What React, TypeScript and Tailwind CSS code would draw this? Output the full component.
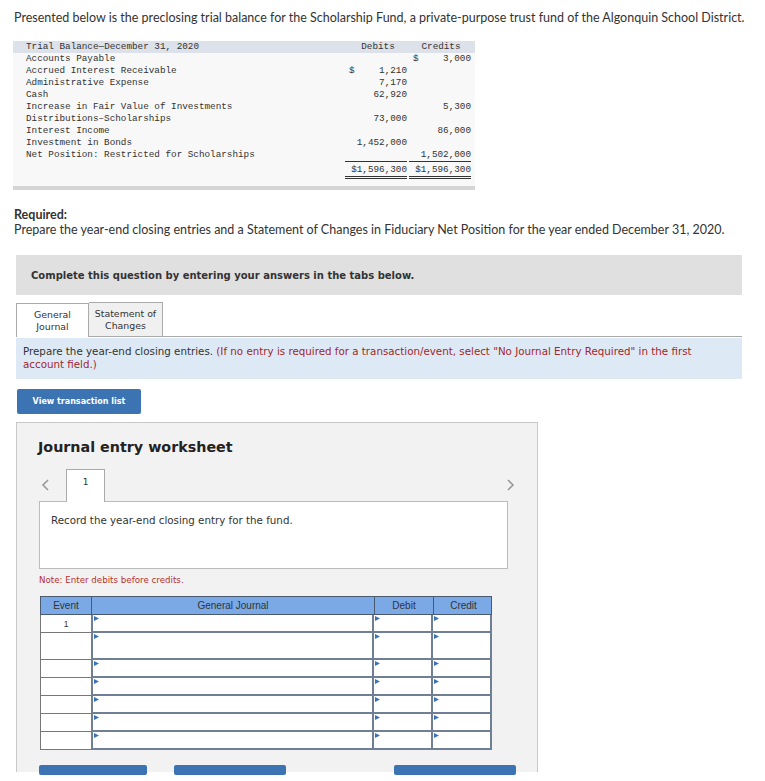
import React from "react";

const rows: [string, string, string, string, string][] = [
  ["Accounts Payable", "", "", "$", "3,000"],
  ["Accrued Interest Receivable", "$", "1,210", "", ""],
  ["Administrative Expense", "", "7,170", "", ""],
  ["Cash", "", "62,920", "", ""],
  ["Increase in Fair Value of Investments", "", "", "", "5,300"],
  ["Distributions\u2013Scholarships", "", "73,000", "", ""],
  ["Interest Income", "", "", "", "86,000"],
  ["Investment in Bonds", "", "1,452,000", "", ""],
  ["Net Position: Restricted for Scholarships", "", "", "", "1,502,000"],
];

function TrialBalance() {
  return (
    <div className="ml-[13px] mt-[15px] w-[462px] bg-[#f8f8f8] font-['Liberation_Mono',monospace] text-[9.3px] leading-[12px] text-[#333]">
      <div className="grid h-[12px] grid-cols-[1fr_62px_62px] bg-[#dde1ea] pr-[4px]">
        <div className="pl-[13px]">Trial Balance{"\u2014"}December 31, 2020</div>
        <div className="text-center">Debits</div>
        <div className="pl-[2px] text-center">Credits</div>
      </div>
      {rows.map((r, i) => (
        <div key={i} className="grid h-[12px] grid-cols-[1fr_62px_62px] gap-x-[2px] pr-[4px]">
          <div className="pl-[13px]">{r[0]}</div>
          <div
            className={`flex justify-between pl-[4px] ${i === 8 ? "border-b border-[#333]" : ""}`}
          >
            <span>{r[1]}</span>
            <span>{r[2]}</span>
          </div>
          <div
            className={`flex justify-between pl-[4px] ${i === 8 ? "border-b border-[#333]" : ""}`}
          >
            <span>{r[3]}</span>
            <span>{r[4]}</span>
          </div>
        </div>
      ))}
      <div className="grid grid-cols-[1fr_62px_62px] gap-x-[2px] pr-[4px] pt-[3px]">
        <div />
        <div className="border-b-[3px] border-double border-[#333] text-right leading-[12px]">
          $1,596,300
        </div>
        <div className="border-b-[3px] border-double border-[#333] text-right leading-[12px]">
          $1,596,300
        </div>
      </div>
      <div className="h-[7px]" />
      <div className="h-[4px] bg-[#d4d4d4]" />
    </div>
  );
}

function Arrow() {
  return (
    <svg width="5" height="5" viewBox="0 0 5 5" className="absolute left-[1px] top-[1px]">
      <path d="M0 0 L5 2.5 L0 5 Z" fill="#3b73b9" />
    </svg>
  );
}

function JournalTable() {
  const heights = [18, 27, 18, 18, 18, 18, 18];
  return (
    <div className="ml-[23px] mt-[10px] w-[452px] font-['Liberation_Sans',Arial,sans-serif] text-[10px] text-[#333]">
      <div className="grid h-[19px] grid-cols-[51px_283px_59px_59px] border border-[#4a5a70] bg-[#7aa9e6]">
        <div className="flex items-center justify-center border-r border-[#4a5a70]">Event</div>
        <div className="flex items-center justify-center border-r border-[#4a5a70]">General Journal</div>
        <div className="flex items-center justify-center border-r border-[#4a5a70]">Debit</div>
        <div className="flex items-center justify-center">Credit</div>
      </div>
      {heights.map((h, i) => (
        <div
          key={i}
          className="grid grid-cols-[51px_283px_59px_59px] bg-white"
          style={{ height: h }}
        >
          <div className="border-b border-l border-[#777] pt-[3px] text-center text-[8.5px]">
            {i === 0 ? "1" : ""}
          </div>
          <div className="relative border-[2px] border-t-0 border-[#6f7f95]">
            <Arrow />
          </div>
          <div className="relative border-b-[2px] border-r-[2px] border-[#6f7f95]">
            <Arrow />
          </div>
          <div className="relative border-b-[2px] border-r-[2px] border-[#6f7f95]">
            <Arrow />
          </div>
        </div>
      ))}
    </div>
  );
}

export default function App() {
  return (
    <div className="h-[781px] w-[765px] overflow-hidden bg-white">
      <p className="pl-[14px] pt-[10px] font-['Lato',sans-serif] text-[12.5px] leading-[16px] text-[#333]">
        Presented below is the preclosing trial balance for the Scholarship Fund, a private-purpose trust fund of the Algonquin School District.
      </p>
      <TrialBalance />
      <div className="pl-[14px] pt-[17px] font-['Lato',sans-serif] text-[12.5px] leading-[15px] text-[#333]">
        <div className="font-bold">Required:</div>
        <div>
          Prepare the year-end closing entries and a Statement of Changes in Fiduciary Net Position for the year ended December 31, 2020.
        </div>
      </div>

      <div className="mx-[16px] mt-[18px] flex h-[40px] w-[726px] items-center bg-[#e0e0e0] pl-[15px] font-['DejaVu_Sans',Verdana,sans-serif] text-[10px] font-bold text-[#333]">
        Complete this question by entering your answers in the tabs below.
      </div>

      <div className="ml-[16px] mt-[8px] w-[726px] font-['DejaVu_Sans',Verdana,sans-serif] text-[#333]">
        <div className="flex h-[34px] items-end border-b border-[#aaa]">
          <div className="relative top-[1px] flex h-[34px] w-[73px] flex-col items-center justify-center border border-b-0 border-[#aaa] bg-white text-[9.4px] leading-[12px]">
            <span>General</span>
            <span>Journal</span>
          </div>
          <div className="flex h-[34px] w-[74px] flex-col items-center justify-center border border-b-0 border-l-0 border-[#aaa] bg-[#f0f0f0] text-[9.4px] leading-[12px]">
            <span>Statement of</span>
            <span>Changes</span>
          </div>
        </div>
        <div className="mt-[1px] h-[41px] bg-[#ddeaf6] pl-[7px] pr-[36px] pt-[7px] text-[10.3px] leading-[13px]">
          Prepare the year-end closing entries. <span className="text-[#a3262a]">(If no entry is required for a transaction/event, select "No Journal Entry Required" in the first account field.)</span>
        </div>
        <button className="ml-[1px] mt-[10px] flex h-[25px] w-[124px] items-center justify-center rounded-[2px] bg-[#3b73b3] text-[8px] font-bold text-white">
          View transaction list
        </button>

        <div className="mt-[8px] h-[350px] w-[522px] border border-b-0 border-[#c8c8c8] bg-[#f2f2f2]">
          <div className="pl-[21px] pt-[14px] text-[14.3px] font-bold leading-[20px] text-[#222]">
            Journal entry worksheet
          </div>
          <div className="mt-[11px] flex h-[33px] items-center">
            <svg width="10" height="12" viewBox="0 0 10 12" className="ml-[24px] mr-[15px]">
              <path d="M7 1 L2 6 L7 11" fill="none" stroke="#999" strokeWidth="1.6" />
            </svg>
            <div className="relative top-[1px] flex h-[33px] w-[39px] items-start justify-center border border-b-0 border-[#aaa] bg-white pt-[6px] text-[9px]">
              1
            </div>
            <div className="flex-1" />
            <svg width="10" height="12" viewBox="0 0 10 12" className="mr-[22px]">
              <path d="M3 1 L8 6 L3 11" fill="none" stroke="#999" strokeWidth="1.6" />
            </svg>
          </div>
          <div className="ml-[22px] h-[68px] w-[469px] border border-[#bbb] bg-white pl-[11px] pt-[12px] text-[10.3px] leading-[12px]">
            Record the year-end closing entry for the fund.
          </div>
          <div className="ml-[22px] mt-[5px] text-[8.7px] leading-[12px] text-[#b8302f]">
            Note: Enter debits before credits.
          </div>
          <JournalTable />
          <div className="ml-[22px] mt-[15px] flex">
            <div className="h-[10px] w-[108px] rounded-[2px] bg-[#3b73b3]" />
            <div className="ml-[27px] h-[10px] w-[112px] rounded-[2px] bg-[#3b73b3]" />
            <div className="ml-[108px] h-[10px] w-[122px] rounded-[2px] bg-[#3b73b3]" />
          </div>
        </div>
      </div>
    </div>
  );
}
